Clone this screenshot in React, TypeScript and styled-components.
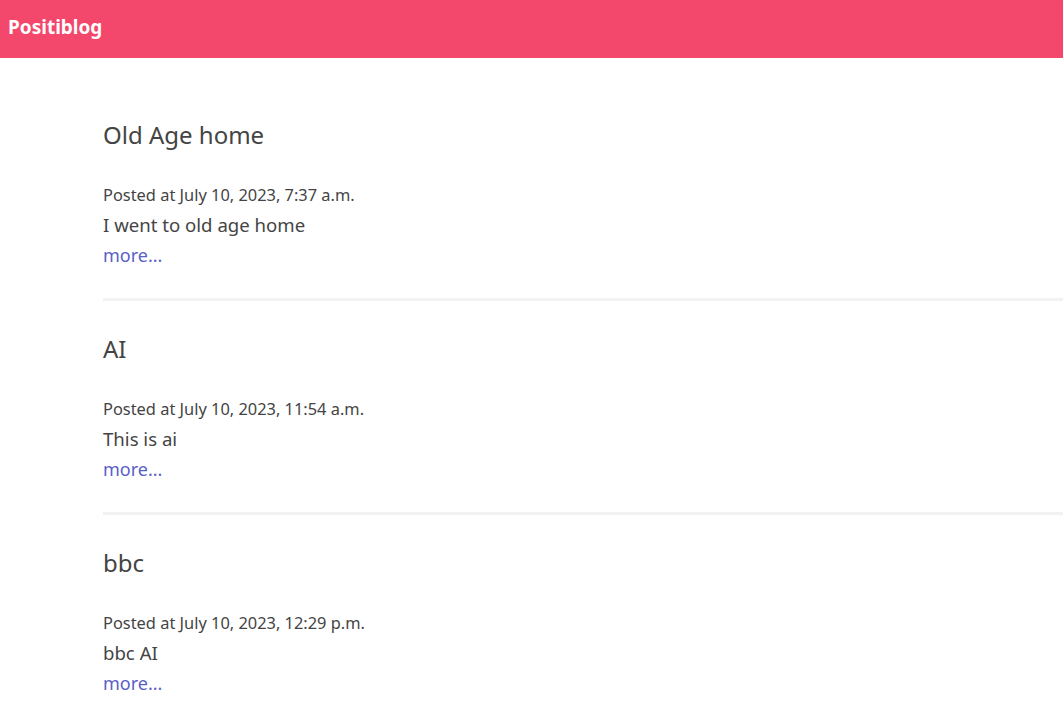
import React from "react";
import styled, { createGlobalStyle } from "styled-components";

const Global = createGlobalStyle`
  html, body { margin: 0; padding: 0; background: #fff; }
  body { font-family: "Noto Sans", "Open Sans", sans-serif; color: #444; }
`;

const Header = styled.header`
  height: 58px;
  background: #f3476b;
  display: flex;
  align-items: center;
  padding: 0 8px;
`;

const Brand = styled.a`
  color: #fff;
  font-weight: 700;
  font-size: 19px;
  text-decoration: none;
  margin-top: -4px;
`;

const Main = styled.main`
  padding: 62px 0 0 103px;
`;

const Post = styled.article``;

const Title = styled.h2`
  margin: 0 0 31px;
  font-size: 24px;
  line-height: 29px;
  font-weight: 400;
  color: #444;
`;

const Meta = styled.p`
  margin: 0;
  font-size: 16.4px;
  line-height: 30px;
  color: #444;
`;

const Body = styled.p`
  margin: 0;
  font-size: 18.6px;
  line-height: 30px;
  color: #444;
`;

const More = styled.a`
  display: block;
  font-size: 18px;
  line-height: 30px;
  color: #5a5fc8;
  text-decoration: none;
`;

const Divider = styled.hr`
  border: 0;
  height: 3px;
  background: #f2f2f2;
  margin: 28px 0 33px;
`;

const posts = [
  { title: "Old Age home", date: "July 10, 2023, 7:37 a.m.", body: "I went to old age home" },
  { title: "AI", date: "July 10, 2023, 11:54 a.m.", body: "This is ai" },
  { title: "bbc", date: "July 10, 2023, 12:29 p.m.", body: "bbc AI" },
];

export default function App() {
  return (
    <>
      <Global />
      <Header>
        <Brand href="#">Positiblog</Brand>
      </Header>
      <Main>
        {posts.map((p, i) => (
          <Post key={i}>
            <Title>{p.title}</Title>
            <Meta>Posted at {p.date}</Meta>
            <Body>{p.body}</Body>
            <More href="#">more...</More>
            <Divider />
          </Post>
        ))}
      </Main>
    </>
  );
}
